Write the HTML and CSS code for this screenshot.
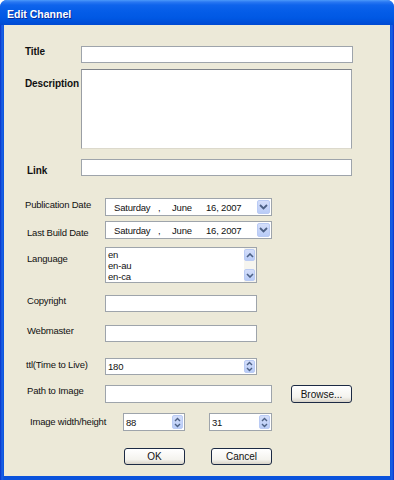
FILE: index.html
```html
<!DOCTYPE html>
<html>
<head>
<meta charset="utf-8">
<link rel="stylesheet" href="styles.css">
</head>
<body>
<div class="window">
  <div class="titlebar"><span class="title">Edit Channel</span></div>
  <div class="frame">
    <div class="client">
      <div class="row r1">
        <span class="lbl bold wa pl21 pt0">Title</span>
        <div class="tb w272 h17"></div>
      </div>
      <div class="row r2">
        <span class="lbl bold wa pl21 pt9">Description</span>
        <div class="tb area w271 h80"></div>
      </div>
      <div class="row r3">
        <span class="lbl bold wa pl23 pt6">Link</span>
        <div class="tb w271 h17"></div>
      </div>
      <div class="row r4">
        <span class="lbl wb pl21 pt1">Publication Date</span>
        <div class="tb date w167 h18">
          <span class="d-day">Saturday</span><span class="d-com">,</span><span class="d-mon">June</span><span class="d-rest">16, 2007</span>
          <span class="ddbtn"><svg width="9" height="6" viewBox="0 0 9 6"><path d="M1 1 L4.5 4.5 L8 1" fill="none" stroke="#4D6185" stroke-width="1.8"/></svg></span>
        </div>
      </div>
      <div class="row r5">
        <span class="lbl wb pl23 pt6">Last Build Date</span>
        <div class="tb date w167 h18">
          <span class="d-day">Saturday</span><span class="d-com">,</span><span class="d-mon">June</span><span class="d-rest">16, 2007</span>
          <span class="ddbtn"><svg width="9" height="6" viewBox="0 0 9 6"><path d="M1 1 L4.5 4.5 L8 1" fill="none" stroke="#4D6185" stroke-width="1.8"/></svg></span>
        </div>
      </div>
      <div class="row r6">
        <span class="lbl wb pl23 pt6">Language</span>
        <div class="tb list w152 h36">
          <div class="items">
            <div>en</div>
            <div>en-au</div>
            <div>en-ca</div>
          </div>
          <div class="vscroll">
            <span class="sbtn"><svg width="8" height="5" viewBox="0 0 8 5"><path d="M1 4 L4 1 L7 4" fill="none" stroke="#4D6185" stroke-width="1.6"/></svg></span>
            <span class="sbtn"><svg width="8" height="5" viewBox="0 0 8 5"><path d="M1 1 L4 4 L7 1" fill="none" stroke="#4D6185" stroke-width="1.6"/></svg></span>
          </div>
        </div>
      </div>
      <div class="row r7">
        <span class="lbl wb pl23 pt0">Copyright</span>
        <div class="tb w152 h17"></div>
      </div>
      <div class="row r8">
        <span class="lbl wb pl23 pt0">Webmaster</span>
        <div class="tb w152 h17"></div>
      </div>
      <div class="row r9">
        <span class="lbl wb pl22 pt1">ttl(Time to Live)</span>
        <div class="tb spin w152 h17">
          <span class="val">180</span>
          <span class="spinbtn"><svg width="7" height="11" viewBox="0 0 7 11"><path d="M1 4 L3.5 1.5 L6 4 M1 7 L3.5 9.5 L6 7" fill="none" stroke="#4D6185" stroke-width="1.4"/></svg></span>
        </div>
      </div>
      <div class="row r10">
        <span class="lbl wb pl23 pt0">Path to Image</span>
        <div class="tb w167 h18"></div>
        <div class="btn browse">Browse...</div>
      </div>
      <div class="row r11">
        <span class="lbl wc pl26 pt3">Image width/height</span>
        <div class="tb spin w62 h18">
          <span class="val">88</span>
          <span class="spinbtn"><svg width="7" height="11" viewBox="0 0 7 11"><path d="M1 4 L3.5 1.5 L6 4 M1 7 L3.5 9.5 L6 7" fill="none" stroke="#4D6185" stroke-width="1.4"/></svg></span>
        </div>
        <div class="tb spin w63 h18 gap24">
          <span class="val">31</span>
          <span class="spinbtn"><svg width="7" height="11" viewBox="0 0 7 11"><path d="M1 4 L3.5 1.5 L6 4 M1 7 L3.5 9.5 L6 7" fill="none" stroke="#4D6185" stroke-width="1.4"/></svg></span>
        </div>
      </div>
      <div class="row r12">
        <div class="btn ok">OK</div>
        <div class="btn cancel">Cancel</div>
      </div>
    </div>
  </div>
</div>
</body>
</html>
```

FILE: styles.css
```css
* { box-sizing: border-box; }
body {
  margin: 0;
  background: #ffffff;
  font-family: "Liberation Sans", Arial, sans-serif;
  font-size: 9.5px;
  letter-spacing: -0.2px;
  color: #111;
}
.window {
  width: 394px;
  height: 480px;
  display: flex;
  flex-direction: column;
  border-radius: 7px 7px 0 0;
  overflow: hidden;
  background: #0A50DA;
}
.titlebar {
  height: 25px;
  flex: none;
  display: flex;
  align-items: center;
  padding: 3px 0 0 7px;
  background: linear-gradient(#4C9AFA 0, #2A78F2 2px, #0F64EC 5px, #055DE8 11px, #0058E4 18px, #004AD2 25px);
}
.title {
  color: #fff;
  font-weight: bold;
  font-size: 10.5px;
  letter-spacing: 0;
  text-shadow: 1px 1px 0 #0A2C9A;
}
.frame {
  flex: 1;
  display: flex;
  padding: 0 4px 4px 4px;
  background: linear-gradient(90deg, #0831C8 0, #1A62E6 2px, #0A52DC 4px, #0A52DC 390px, #1A62E6 392px, #0831C8 394px);
}
.client {
  flex: 1;
  display: flex;
  flex-direction: column;
  background: #ECE9D8;
}
.row {
  display: flex;
  align-items: flex-start;
  flex: none;
}
.r1 { margin-top: 21px; }
.r2 { margin-top: 6px; }
.r3 { margin-top: 10px; }
.r4 { margin-top: 22px; }
.r5 { margin-top: 5px; }
.r6 { margin-top: 8px; }
.r7 { margin-top: 12px; }
.r8 { margin-top: 13px; }
.r9 { margin-top: 16px; }
.r10 { margin-top: 10px; }
.r11 { margin-top: 10px; }
.r12 { margin-top: 17px; padding-left: 120px; }

.lbl {
  flex: none;
  line-height: 11px;
  white-space: nowrap;
}
.bold { font-weight: bold; font-size: 10px; letter-spacing: -0.1px; }
.wa { width: 77px; }
.wb { width: 101px; }
.wc { width: 119px; }
.pl21 { padding-left: 21px; }
.pl22 { padding-left: 22px; }
.pl23 { padding-left: 23px; }
.pl26 { padding-left: 26px; }
.pt0 { padding-top: 0; }
.pt1 { padding-top: 1px; }
.pt3 { padding-top: 3px; }
.pt6 { padding-top: 6px; }
.pt9 { padding-top: 9px; }

.tb {
  flex: none;
  background: #fff;
  border: 1px solid #9EA4AB;
  position: relative;
}
.area {
  border-top-color: #7E8288;
  border-left-color: #9A9EA4;
  border-bottom-color: #DCD9CC;
}
.w272 { width: 272px; }
.w271 { width: 271px; }
.w167 { width: 167px; }
.w152 { width: 152px; }
.w62 { width: 62px; }
.w63 { width: 63px; }
.h17 { height: 17px; }
.h18 { height: 18px; }
.h36 { height: 36px; }
.h80 { height: 80px; }
.gap24 { margin-left: 24px; }

.date {
  display: flex;
  align-items: center;
  padding-left: 8px;
  white-space: nowrap;
}
.d-day { width: 44px; }
.d-com { width: 14px; }
.d-mon { width: 34px; }
.d-rest { width: 40px; }
.ddbtn {
  position: absolute;
  right: 1px;
  top: 1px;
  width: 13px;
  height: 14px;
  border-radius: 2px;
  border: 1px solid #BACBF4;
  background: linear-gradient(#D4DEFA, #B9CCF7);
  display: flex;
  align-items: center;
  justify-content: center;
}

.list {
  display: flex;
}
.items {
  flex: 1;
  padding: 1px 0 0 2px;
  line-height: 11px;
}
.vscroll {
  width: 12px;
  display: flex;
  flex-direction: column;
  justify-content: space-between;
  padding: 1px 1px 1px 0;
  background: #F6F5EF;
}
.sbtn {
  height: 12px;
  border-radius: 2px;
  border: 1px solid #BACBF4;
  background: linear-gradient(#D4DEFA, #B9CCF7);
  display: flex;
  align-items: center;
  justify-content: center;
}

.spin {
  display: flex;
  align-items: center;
  padding-left: 2px;
}
.val { flex: 1; }
.spinbtn {
  position: absolute;
  right: 1px;
  top: 1px;
  bottom: 1px;
  width: 11px;
  border-radius: 2px;
  border: 1px solid #BACBF4;
  background: linear-gradient(#D4DEFA, #B9CCF7);
  display: flex;
  align-items: center;
  justify-content: center;
}

.btn {
  flex: none;
  width: 61px;
  height: 17px;
  border: 1px solid #1C2A44;
  border-radius: 3px;
  background: linear-gradient(#FFFFFF, #F4F3EE 70%, #D8D3C8);
  display: flex;
  align-items: center;
  justify-content: center;
  font-size: 10px;
  letter-spacing: 0;
}
.browse { height: 18px; margin-left: 19px; }
.cancel { margin-left: 26px; }
```
